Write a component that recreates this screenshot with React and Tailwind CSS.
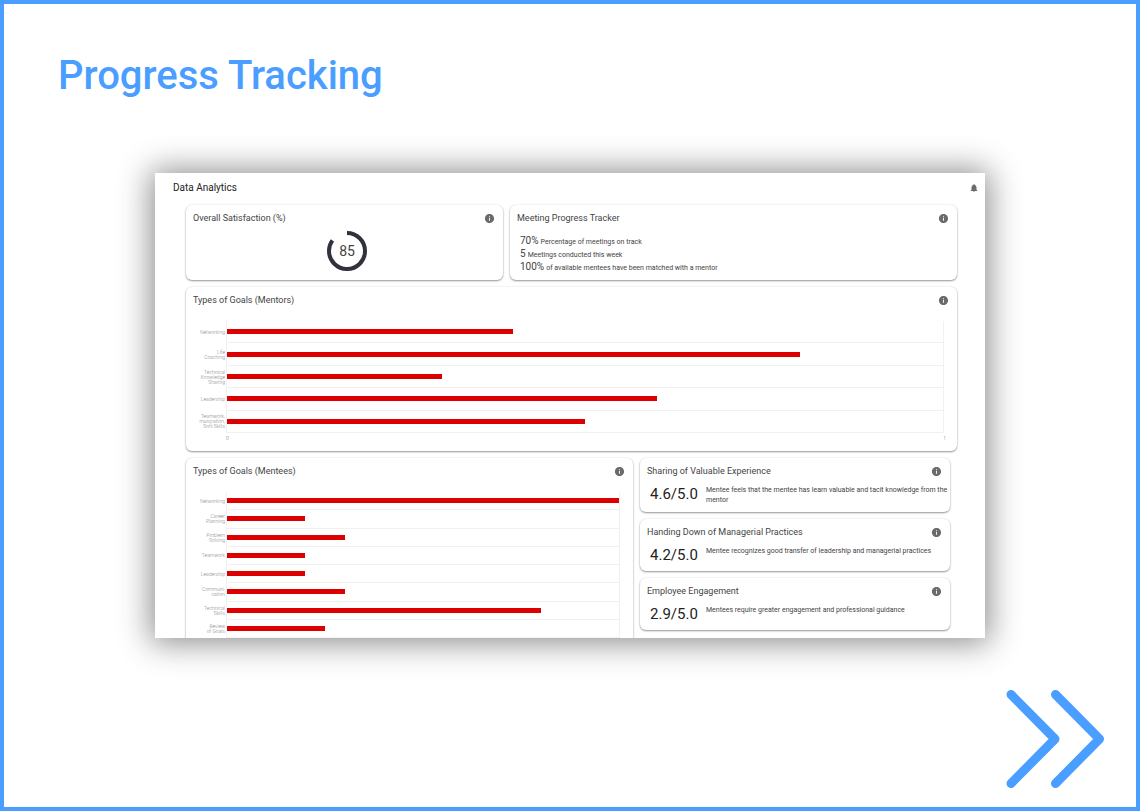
import { MdInfo, MdNotifications } from 'react-icons/md';

const mentorGoals = [
  { lines: ['Networking'], value: 40 },
  { lines: ['Life', 'Coaching'], value: 80 },
  { lines: ['Technical', 'Knowledge', 'Sharing'], value: 30 },
  { lines: ['Leadership'], value: 60 },
  { lines: ['Teamwork,', 'munication,', 'Soft-Skills'], value: 50 },
];

const menteeGoals = [
  { lines: ['Networking'], value: 100 },
  { lines: ['Career', 'Planning'], value: 20 },
  { lines: ['Problem', 'Solving'], value: 30 },
  { lines: ['Teamwork'], value: 20 },
  { lines: ['Leadership'], value: 20 },
  { lines: ['Communi-', 'cation'], value: 30 },
  { lines: ['Technical', 'Skills'], value: 80 },
  { lines: ['Review', 'of Goals'], value: 25 },
];

const meetingStats = [
  { value: '70%', label: 'Percentage of meetings on track' },
  { value: '5', label: 'Meetings conducted this week' },
  { value: '100%', label: 'of available mentees have been matched with a mentor' },
];

const ratings = [
  {
    title: 'Sharing of Valuable Experience',
    score: '4.6/5.0',
    text: 'Mentee feels that the mentee has learn valuable and tacit knowledge from the mentor',
  },
  {
    title: 'Handing Down of Managerial Practices',
    score: '4.2/5.0',
    text: 'Mentee recognizes good transfer of leadership and managerial practices',
  },
  {
    title: 'Employee Engagement',
    score: '2.9/5.0',
    text: 'Mentees require greater engagement and professional guidance',
  },
];

const Card = ({ title, className = 'rounded-md pb-[7px]', children }) => (
  <section
    className={`bg-white pt-[7px] pl-[7px] pr-0.5 shadow-[0_1px_2px_rgba(0,0,0,0.4),0_0_2px_rgba(0,0,0,0.1)] ${className}`}
  >
    <div className="flex h-3 items-center justify-between pr-1.5">
      <h3 className="text-[9px] leading-3 text-[#444]">{title}</h3>
      <button type="button" aria-label={`About ${title}`} className="text-[#6b6b6b]">
        <MdInfo size={11} />
      </button>
    </div>
    {children}
  </section>
);

const BarChart = ({ data, className }) => (
  <div className={`mt-[15px] flex flex-col pr-[11px] ${className}`}>
    {data.map((item) => (
      <div key={item.lines.join(' ')} className="flex flex-1 items-stretch">
        <div className="flex w-[33px] flex-col justify-center pr-px text-right text-[5px] leading-[5px] font-light text-[#8a8a8a]">
          {item.lines.map((line) => (
            <span key={line}>{line}</span>
          ))}
        </div>
        <div className="flex flex-1 items-center border-x border-b border-[#f1f1f1]">
          <div className="h-[5px] bg-[#dd0000]" style={{ width: `${item.value}%` }} />
        </div>
      </div>
    ))}
  </div>
);

const SatisfactionRing = ({ value }) => (
  <div className="mt-[7px] grid place-items-center">
    <svg viewBox="0 0 40 40" className="col-start-1 row-start-1 size-10 -rotate-90" aria-hidden="true">
      <circle
        cx="20"
        cy="20"
        r="18"
        fill="none"
        stroke="#32323e"
        strokeWidth="4"
        pathLength="100"
        strokeDasharray={`${value} 100`}
      />
    </svg>
    <span className="col-start-1 row-start-1 text-sm text-[#444]">{value}</span>
  </div>
);

const Dashboard = () => (
  <div className="mx-auto mt-[73px] w-full max-w-[830px] bg-white shadow-[0_1px_30px_4px_rgba(0,0,0,0.45)]">
    <div className="overflow-hidden">
      <header className="flex h-8 items-center justify-between pb-[2px] pl-[18px] pr-1.5">
        <h2 className="text-[10px] leading-3 text-[#222]">Data Analytics</h2>
        <button type="button" aria-label="Notifications" className="text-[#6b6b6b]">
          <MdNotifications size={10} />
        </button>
      </header>

      <main className="flex flex-col gap-[7px] pl-[31px] pr-7">
        <div className="grid grid-cols-[317fr_447fr] gap-[7px]">
          <Card title="Overall Satisfaction (%)">
            <SatisfactionRing value={85} />
          </Card>
          <Card title="Meeting Progress Tracker">
            <div className="mt-[10px] pl-[3px]">
              {meetingStats.map((stat) => (
                <p key={stat.value} className="flex h-[13px] items-baseline gap-[2px] text-[10px] leading-[13px] text-[#444]">
                  <span>{stat.value}</span>
                  <span className="text-[7px]">{stat.label}</span>
                </p>
              ))}
            </div>
          </Card>
        </div>

        <Card title="Types of Goals (Mentors)">
          <BarChart data={mentorGoals} className="h-28" />
          <div className="flex justify-between pl-[33px] pr-[9px] text-[5px] leading-[11px] font-light text-[#777]">
            <span>0</span>
            <span>1</span>
          </div>
        </Card>

        <div className="grid grid-cols-[447fr_310fr] gap-[7px] pr-[7px]">
          <Card title="Types of Goals (Mentees)" className="rounded-t-md">
            <BarChart data={menteeGoals} className="h-[146px]" />
          </Card>
          <div className="flex flex-col gap-[7px]">
            {ratings.map((rating) => (
              <Card key={rating.title} title={rating.title}>
                <div className="mt-2 flex items-start pl-[3px]">
                  <p className="w-14 shrink-0 text-[15px] leading-[18px] text-[#222]">{rating.score}</p>
                  <p className="text-[7px] leading-[10px] text-[#444]">{rating.text}</p>
                </div>
              </Card>
            ))}
          </div>
        </div>
      </main>
    </div>
  </div>
);

export default function App() {
  return (
    <div className="flex min-h-screen flex-col border-4 border-[#4a9eff] bg-white font-[Roboto,sans-serif]">
      <h1 className="pt-12 pl-[54px] text-[40px] leading-[48px] font-medium text-[#4a9eff]">
        Progress Tracking
      </h1>
      <Dashboard />
      <div className="mt-auto flex justify-end pr-8 pb-[19px]">
        <button type="button" aria-label="Next">
          <svg
            viewBox="0 0 98 98"
            className="size-[98px]"
            fill="none"
            stroke="#4a9eff"
            strokeWidth="9"
            strokeLinecap="round"
            strokeLinejoin="round"
          >
            <path d="M5 4.500 L49 49 L5 93.500" />
            <path d="M49.500 4.500 L93.500 49 L49.500 93.500" />
          </svg>
        </button>
      </div>
    </div>
  );
}
